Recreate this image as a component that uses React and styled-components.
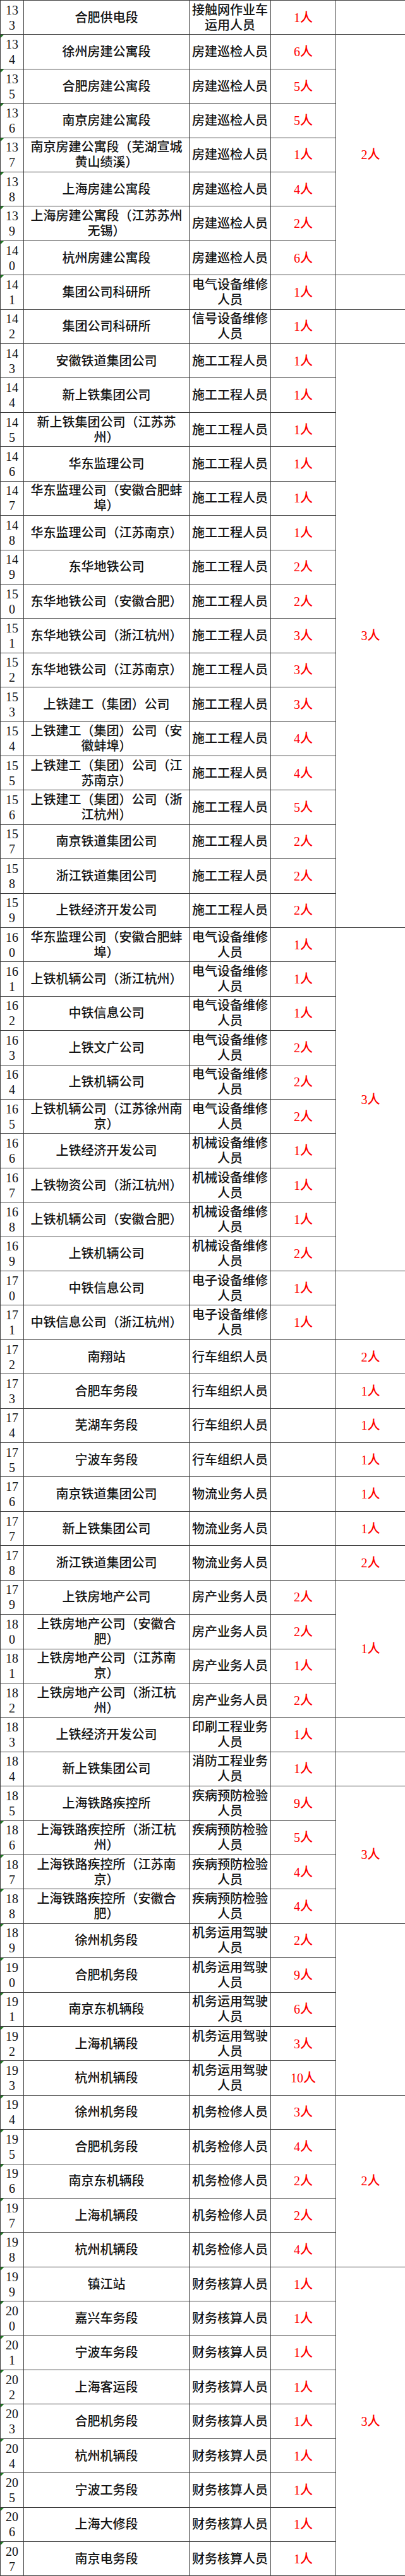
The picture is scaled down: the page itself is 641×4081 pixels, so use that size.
import React from "react";
import styled, { createGlobalStyle } from "styled-components";

const Global = createGlobalStyle`
  html, body { margin: 0; padding: 0; background: #fff; }
  body { font-family: "Liberation Serif", "Noto Sans CJK SC", serif; }
`;

const Table = styled.table`
  width: 641px;
  table-layout: fixed;
  border-collapse: collapse;
  font-family: "Liberation Serif", "Noto Sans CJK SC", serif;
  font-size: 20px;
  line-height: 24px;
  font-weight: 500;
  color: #141414;
  text-spacing-trim: space-all;
`;

const Col = styled.col`
  width: ${(p) => p.$w}px;
`;

const Row = styled.tr`
  height: 54.41px;
`;

const Cell = styled.td`
  position: relative;
  border: 1px solid #3c3c3c;
  padding: 0 2px;
  text-align: center;
  vertical-align: middle;
  overflow: hidden;
  text-spacing-trim: space-all;
  color: ${(p) => (p.$red ? "#f00" : "#141414")};
  &::before {
    content: "";
    display: ${(p) => (p.$flag ? "block" : "none")};
    position: absolute;
    left: 0;
    top: 0;
    width: 0;
    height: 0;
    border-top: 5px solid #1e7b22;
    border-right: 5px solid transparent;
  }
`;

const NumCell = styled(Cell)`
  padding: 0 4px;
  word-break: break-all;
`;

const rows = [
  [133, "合肥供电段", "接触网作业车运用人员", "1人"],
  [134, "徐州房建公寓段", "房建巡检人员", "6人"],
  [135, "合肥房建公寓段", "房建巡检人员", "5人"],
  [136, "南京房建公寓段", "房建巡检人员", "5人"],
  [137, "南京房建公寓段（芜湖宣城黄山绩溪）", "房建巡检人员", "1人"],
  [138, "上海房建公寓段", "房建巡检人员", "4人"],
  [139, "上海房建公寓段（江苏苏州无锡）", "房建巡检人员", "2人"],
  [140, "杭州房建公寓段", "房建巡检人员", "6人"],
  [141, "集团公司科研所", "电气设备维修人员", "1人"],
  [142, "集团公司科研所", "信号设备维修人员", "1人"],
  [143, "安徽铁道集团公司", "施工工程人员", "1人"],
  [144, "新上铁集团公司", "施工工程人员", "1人"],
  [145, "新上铁集团公司（江苏苏州）", "施工工程人员", "1人"],
  [146, "华东监理公司", "施工工程人员", "1人"],
  [147, "华东监理公司（安徽合肥蚌埠）", "施工工程人员", "1人"],
  [148, "华东监理公司（江苏南京）", "施工工程人员", "1人"],
  [149, "东华地铁公司", "施工工程人员", "2人"],
  [150, "东华地铁公司（安徽合肥）", "施工工程人员", "2人"],
  [151, "东华地铁公司（浙江杭州）", "施工工程人员", "3人"],
  [152, "东华地铁公司（江苏南京）", "施工工程人员", "3人"],
  [153, "上铁建工（集团）公司", "施工工程人员", "3人"],
  [154, "上铁建工（集团）公司（安徽蚌埠）", "施工工程人员", "4人"],
  [155, "上铁建工（集团）公司（江苏南京）", "施工工程人员", "4人"],
  [156, "上铁建工（集团）公司（浙江杭州）", "施工工程人员", "5人"],
  [157, "南京铁道集团公司", "施工工程人员", "2人"],
  [158, "浙江铁道集团公司", "施工工程人员", "2人"],
  [159, "上铁经济开发公司", "施工工程人员", "2人"],
  [160, "华东监理公司（安徽合肥蚌埠）", "电气设备维修人员", "1人"],
  [161, "上铁机辆公司（浙江杭州）", "电气设备维修人员", "1人"],
  [162, "中铁信息公司", "电气设备维修人员", "1人"],
  [163, "上铁文广公司", "电气设备维修人员", "2人"],
  [164, "上铁机辆公司", "电气设备维修人员", "2人"],
  [165, "上铁机辆公司（江苏徐州南京）", "电气设备维修人员", "2人"],
  [166, "上铁经济开发公司", "机械设备维修人员", "1人"],
  [167, "上铁物资公司（浙江杭州）", "机械设备维修人员", "1人"],
  [168, "上铁机辆公司（安徽合肥）", "机械设备维修人员", "1人"],
  [169, "上铁机辆公司", "机械设备维修人员", "2人"],
  [170, "中铁信息公司", "电子设备维修人员", "1人"],
  [171, "中铁信息公司（浙江杭州）", "电子设备维修人员", "1人"],
  [172, "南翔站", "行车组织人员", ""],
  [173, "合肥车务段", "行车组织人员", ""],
  [174, "芜湖车务段", "行车组织人员", ""],
  [175, "宁波车务段", "行车组织人员", ""],
  [176, "南京铁道集团公司", "物流业务人员", ""],
  [177, "新上铁集团公司", "物流业务人员", ""],
  [178, "浙江铁道集团公司", "物流业务人员", ""],
  [179, "上铁房地产公司", "房产业务人员", "2人"],
  [180, "上铁房地产公司（安徽合肥）", "房产业务人员", "2人"],
  [181, "上铁房地产公司（江苏南京）", "房产业务人员", "1人"],
  [182, "上铁房地产公司（浙江杭州）", "房产业务人员", "2人"],
  [183, "上铁经济开发公司", "印刷工程业务人员", "1人"],
  [184, "新上铁集团公司", "消防工程业务人员", "1人"],
  [185, "上海铁路疾控所", "疾病预防检验人员", "9人"],
  [186, "上海铁路疾控所（浙江杭州）", "疾病预防检验人员", "5人"],
  [187, "上海铁路疾控所（江苏南京）", "疾病预防检验人员", "4人"],
  [188, "上海铁路疾控所（安徽合肥）", "疾病预防检验人员", "4人"],
  [189, "徐州机务段", "机务运用驾驶人员", "2人"],
  [190, "合肥机务段", "机务运用驾驶人员", "9人"],
  [191, "南京东机辆段", "机务运用驾驶人员", "6人"],
  [192, "上海机辆段", "机务运用驾驶人员", "3人"],
  [193, "杭州机辆段", "机务运用驾驶人员", "10人"],
  [194, "徐州机务段", "机务检修人员", "3人"],
  [195, "合肥机务段", "机务检修人员", "4人"],
  [196, "南京东机辆段", "机务检修人员", "2人"],
  [197, "上海机辆段", "机务检修人员", "2人"],
  [198, "杭州机辆段", "机务检修人员", "4人"],
  [199, "镇江站", "财务核算人员", "1人"],
  [200, "嘉兴车务段", "财务核算人员", "1人"],
  [201, "宁波车务段", "财务核算人员", "1人"],
  [202, "上海客运段", "财务核算人员", "1人"],
  [203, "合肥机务段", "财务核算人员", "1人"],
  [204, "杭州机辆段", "财务核算人员", "1人"],
  [205, "宁波工务段", "财务核算人员", "1人"],
  [206, "上海大修段", "财务核算人员", "1人"],
  [207, "南京电务段", "财务核算人员", "1人"],
];

const groups = {
  133: [1, ""],
  134: [7, "2人"],
  141: [1, ""],
  142: [1, ""],
  143: [17, "3人"],
  160: [10, "3人"],
  170: [2, ""],
  172: [1, "2人"],
  173: [1, "1人"],
  174: [1, "1人"],
  175: [1, "1人"],
  176: [1, "1人"],
  177: [1, "1人"],
  178: [1, "2人"],
  179: [4, "1人"],
  183: [1, ""],
  184: [1, ""],
  185: [4, "3人"],
  189: [5, ""],
  194: [5, "2人"],
  199: [9, "3人"],
};

const columnWidths = [37, 262, 129, 103, 110];

const isFlagged = (n) => (n >= 134 && n <= 141) || n >= 186;

export default function App() {
  return (
    <>
      <Global />
      <Table>
        <colgroup>
          {columnWidths.map((w, i) => (
            <Col key={i} $w={w} />
          ))}
        </colgroup>
        <tbody>
          {rows.map(([n, org, role, count]) => {
            const g = groups[n];
            return (
              <Row key={n}>
                <NumCell $flag={isFlagged(n)}>{n}</NumCell>
                <Cell>{org}</Cell>
                <Cell>{role}</Cell>
                <Cell $red>{count}</Cell>
                {g && (
                  <Cell $red rowSpan={g[0]}>
                    {g[1]}
                  </Cell>
                )}
              </Row>
            );
          })}
        </tbody>
      </Table>
    </>
  );
}
